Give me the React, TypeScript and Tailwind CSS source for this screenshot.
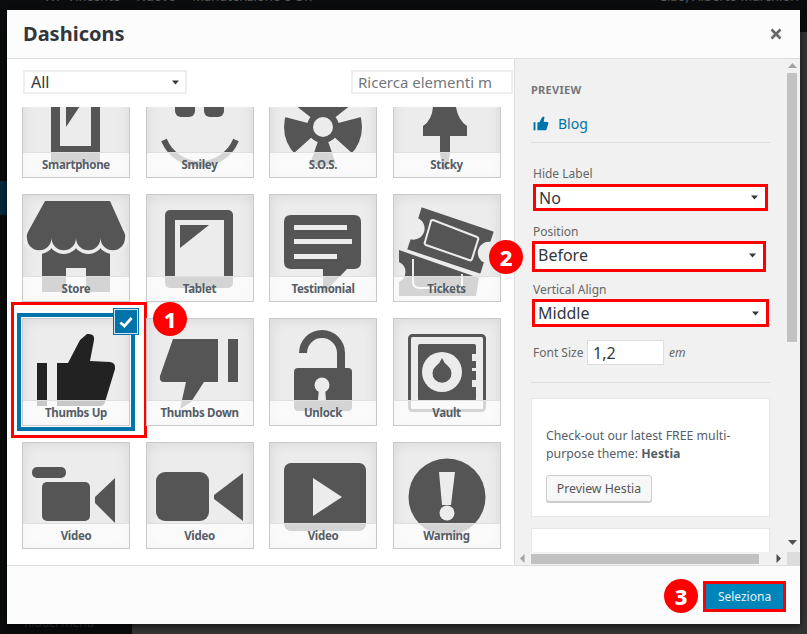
import type { ReactNode } from 'react';

const DARK = '#555555';
const LIGHT = '#ececec';

const thumbsUp = 'M35 45 L46 45 L58 22 L65 16 Q73 15 72 22 L68 43 L88 44 Q94 45 93 51 L83 84 Q82 88 78 88 L35 88 Z';

const icons: Record<string, ReactNode> = {
  Smartphone: (
    <>
      <rect x="29" y="16" width="49" height="77" fill={DARK} />
      <rect x="38" y="26" width="31" height="50" fill={LIGHT} />
      <path d="M44 30 H62 L44 57 Z" fill={DARK} />
    </>
  ),
  Smiley: (
    <>
      <rect x="29" y="32" width="20" height="15" rx="6" fill={DARK} />
      <rect x="58" y="32" width="20" height="15" rx="6" fill={DARK} />
      <path d="M18 70 A39 39 0 0 0 90 70" fill="none" stroke={DARK} strokeWidth="6" />
    </>
  ),
  'S.O.S.': (
    <>
      <circle cx="54" cy="57" r="39" fill={DARK} />
      <path d="M54 57 L21 31 L16 38 L12 46 Z M54 57 L87 31 L92 38 L96 46 Z M54 57 L24 84 L30 92 L40 97 Z M54 57 L84 84 L78 92 L68 97 Z" fill={LIGHT} />
      <circle cx="54" cy="57" r="16" fill={DARK} />
      <circle cx="54" cy="57" r="10" fill={LIGHT} />
    </>
  ),
  Sticky: (
    <path d="M40 16 H63 V37 Q65 50 74 56 V66 H57 V84 L54 100 L50 100 L47 84 V66 H30 V56 Q39 50 40 37 Z" fill={DARK} />
  ),
  Store: (
    <>
      <rect x="20" y="48" width="68" height="50" fill={DARK} />
      <rect x="44" y="74" width="20" height="24" fill={LIGHT} />
      <circle cx="17.25" cy="44" r="16" fill={LIGHT} />
      <circle cx="41.75" cy="44" r="16" fill={LIGHT} />
      <circle cx="66.25" cy="44" r="16" fill={LIGHT} />
      <circle cx="90.75" cy="44" r="16" fill={LIGHT} />
      <path d="M23 7 H88 L101 36 Q104 41 103 44 A12.25 12.25 0 0 1 78.5 44 A12.25 12.25 0 0 1 54 44 A12.25 12.25 0 0 1 29.5 44 A12.25 12.25 0 0 1 5 44 Q4 41 7 36 Z" fill={DARK} />
    </>
  ),
  Tablet: (
    <>
      <rect x="19" y="16" width="68" height="78" rx="5" fill={DARK} />
      <rect x="29" y="26" width="49" height="56" fill={LIGHT} />
      <path d="M34 31 H63 L34 54 Z" fill={DARK} />
    </>
  ),
  Testimonial: (
    <>
      <path d="M22 21 H85 Q92 21 92 28 V68 Q92 75 85 75 H78 L54 100 V75 H22 Q15 75 15 68 V28 Q15 21 22 21 Z" fill={DARK} />
      <rect x="25" y="31" width="53" height="5" fill={LIGHT} />
      <rect x="25" y="45" width="58" height="5" fill={LIGHT} />
      <rect x="25" y="60" width="43" height="5" fill={LIGHT} />
    </>
  ),
  Tickets: (
    <>
      <path d="M6 56 L86 84 L83 102 H6 V88 A11 11 0 0 0 6 68 Z" fill={DARK} />
      <path d="M20 65 V88 Q20 94 27 94 H69 V80" fill="none" stroke={LIGHT} strokeWidth="2" />
      <path d="M28 12 L102 37 L98 49 A10 10 0 0 0 92 68 L88 81 L13 56 L17 44 A10 10 0 0 0 24 25 Z" fill={DARK} stroke={LIGHT} strokeWidth="2" />
      <path d="M40 26 L84 43 Q86 44 85 46 L79 65 Q78 67 76 66 L33 51 Q31 50 32 48 L38 27 Q38 26 40 26 Z" fill="none" stroke={LIGHT} strokeWidth="2" />
    </>
  ),
  'Thumbs Up': (
    <>
      <rect x="15" y="45" width="10" height="43" fill="#222222" />
      <path d={thumbsUp} fill="#222222" />
    </>
  ),
  'Thumbs Down': (
    <>
      <rect x="82" y="21" width="10" height="43" fill={DARK} />
      <path d="M72 21 H27 L14 58 Q13 64 18 64 H40 L34 91 L45 84 L58 64 H72 Z" fill={DARK} />
    </>
  ),
  Unlock: (
    <>
      <path d="M34 35 A19 19 0 0 1 72 35 V50" fill="none" stroke={DARK} strokeWidth="8" />
      <rect x="25" y="50" width="58" height="43" rx="4" fill={DARK} />
      <circle cx="53" cy="67" r="7.5" fill={LIGHT} />
      <path d="M50 70 H56 L57 82 H49 Z" fill={LIGHT} />
    </>
  ),
  Vault: (
    <>
      <rect x="16.5" y="17.5" width="75" height="75" rx="3" fill="none" stroke={DARK} strokeWidth="3" />
      <rect x="25" y="26" width="58" height="57" rx="2" fill={DARK} />
      <rect x="79" y="36" width="4" height="7" fill={LIGHT} />
      <rect x="79" y="50" width="4" height="3" fill={LIGHT} />
      <rect x="79" y="62" width="4" height="7" fill={LIGHT} />
      <circle cx="49" cy="54" r="20" fill={LIGHT} />
      <path d="M49 40 Q51 45 55 48 A9.5 9.5 0 1 1 43 48 Q47 45 49 40 Z" fill={DARK} />
    </>
  ),
  Video1: (
    <>
      <rect x="10" y="25" width="34" height="11" rx="5" fill={DARK} />
      <rect x="20" y="40" width="48" height="39" rx="5" fill={DARK} />
      <path d="M93 36 V81 L73 61 V55 Z" fill={DARK} />
    </>
  ),
  Video2: (
    <>
      <rect x="10" y="30" width="53" height="49" rx="9" fill={DARK} />
      <path d="M97 31 V79 L68 57 V53 Z" fill={DARK} />
    </>
  ),
  Video3: (
    <>
      <rect x="15" y="21" width="82" height="68" rx="7" fill={DARK} />
      <path d="M44 36 V74 L73 55 Z" fill={LIGHT} />
    </>
  ),
  Warning: (
    <>
      <circle cx="54" cy="55" r="38.5" fill={DARK} />
      <path d="M46 30 H62 L58 63 H49 Z" fill={LIGHT} />
      <circle cx="54" cy="71" r="7.5" fill={LIGHT} />
    </>
  ),
};

const tiles = [
  { id: 'Smartphone', label: 'Smartphone' },
  { id: 'Smiley', label: 'Smiley' },
  { id: 'S.O.S.', label: 'S.O.S.' },
  { id: 'Sticky', label: 'Sticky' },
  { id: 'Store', label: 'Store' },
  { id: 'Tablet', label: 'Tablet' },
  { id: 'Testimonial', label: 'Testimonial' },
  { id: 'Tickets', label: 'Tickets' },
  { id: 'Thumbs Up', label: 'Thumbs Up' },
  { id: 'Thumbs Down', label: 'Thumbs Down' },
  { id: 'Unlock', label: 'Unlock' },
  { id: 'Vault', label: 'Vault' },
  { id: 'Video1', label: 'Video', short: true },
  { id: 'Video2', label: 'Video', short: true },
  { id: 'Video3', label: 'Video', short: true },
  { id: 'Warning', label: 'Warning', short: true },
];

function Tile({ id, label, short }: { id: string; label: string; short?: boolean }) {
  const selected = id === 'Thumbs Up';
  return (
    <div className={`relative w-[108px] border border-[#c9c9c9] bg-[#ececec] shadow-[inset_0_0_14px_rgba(0,0,0,0.09)] ${short ? 'h-[107px]' : 'h-[108px]'} ${selected ? 'outline-4 outline-offset-[1px] outline-[#0073aa]' : ''}`}>
      <svg viewBox="0 0 108 108" className="absolute -inset-px h-[108px] w-[108px]">
        {icons[id]}
      </svg>
      <div className="absolute inset-x-0 bottom-0 h-[25px] border-t border-[#dfdfdf] bg-white/75 text-center text-[11.5px] font-bold leading-[23px] tracking-[-0.3px] text-[#555d66]">
        {label}
      </div>
      {selected && (
        <>
          <div className="absolute -left-[12px] -top-[17px] h-[136px] w-[136px] border-[3px] border-[#ff0000]" />
          <div className="absolute -right-[10px] -top-[11px] flex h-[27px] w-[26px] items-center justify-center border border-[#0073aa] bg-[#0073aa] shadow-[inset_0_0_0_1px_#cfe3ee]">
            <svg viewBox="0 0 20 20" className="h-[16px] w-[16px]">
              <path d="M3 10.5 L8 15 L17 5" fill="none" stroke="#ffffff" strokeWidth="3.4" />
            </svg>
          </div>
        </>
      )}
    </div>
  );
}

function Marker({ n, className }: { n: number; className: string }) {
  return (
    <div className={`absolute flex h-[34px] w-[34px] items-center justify-center rounded-full bg-[#ff0000] text-[22px] font-extrabold leading-none text-white ${className}`}>
      {n}
    </div>
  );
}

function Arrow({ dir, className = '' }: { dir: 'up' | 'down' | 'left' | 'right'; className?: string }) {
  const d = { up: 'M0 6 L4.5 1 L9 6 Z', down: 'M0 2 L4.5 7 L9 2 Z', left: 'M6.5 0 L2 4.5 L6.5 9 Z', right: 'M2.5 0 L7 4.5 L2.5 9 Z' }[dir];
  return (
    <svg viewBox="0 0 9 9" className={`shrink-0 ${className}`}>
      <path d={d} fill="currentColor" />
    </svg>
  );
}

function RedSelect({ value, className }: { value: string; className: string }) {
  return (
    <div className={`flex items-center justify-between border-[3px] border-[#ff0000] bg-white pl-[3px] pr-[7px] text-[16px] text-[#32373c] ${className}`}>
      <span>{value}</span>
      <Arrow dir="down" className="h-[7px] w-[7px] text-[#32373c]" />
    </div>
  );
}

export default function App() {
  return (
    <div className="relative h-[634px] w-[807px] overflow-hidden bg-[#333333] font-['Noto_Sans',sans-serif]">
      {/* admin page behind the modal */}
      <div className="h-[32px] overflow-hidden bg-[#0b0c0e] text-[13px] leading-[14px] text-[#55585c]">
        <div className="-mt-[11px] flex justify-between pl-[44px] pr-[8px]">
          <div className="flex gap-[16px]">
            <span>WP Vincente</span>
            <span>Nuovo</span>
            <span>Manutenzione è On</span>
          </div>
          <span>Ciao, Alberto Marchiori</span>
        </div>
      </div>
      <div className="flex h-[602px]">
        <div className="flex w-[132px] flex-col bg-[#090b0c]">
          <div className="mt-[149px] h-[34px] bg-[#03293c]" />
          <div className="mt-auto pb-[4px] pl-[24px] text-[12px] leading-[14px] text-[#2e3134]">Riduci menu</div>
        </div>
      </div>

      {/* modal */}
      <div className="absolute left-[7px] top-[10px] flex h-[614px] w-[793px] flex-col bg-[#fcfcfc] shadow-[0_2px_6px_rgba(0,0,0,0.6)]">
        <div className="flex h-[49px] shrink-0 items-center justify-between border-b border-[#dddddd] pl-[16px] pr-[18px]">
          <h1 className="text-[20px] font-bold text-[#32373c]">Dashicons</h1>
          <svg viewBox="0 0 12 12" className="h-[12px] w-[12px]">
            <path d="M1.5 1.5 L10.5 10.5 M10.5 1.5 L1.5 10.5" stroke="#666666" strokeWidth="2.6" />
          </svg>
        </div>

        <div className="flex h-[506px] shrink-0">
          <div className="flex w-[508px] shrink-0 flex-col border-r border-[#dddddd] bg-white">
            <div className="flex h-[48px] shrink-0 items-start justify-between pl-[16px] pr-[1px] pt-[11px]">
              <div className="flex h-[24px] w-[164px] items-center justify-between border-2 border-[#eeeeee] pl-[6px] pr-[6px] text-[16px] text-[#32373c]">
                <span>All</span>
                <Arrow dir="down" className="h-[7px] w-[7px]" />
              </div>
              <div className="flex h-[24px] w-[162px] items-center overflow-hidden whitespace-nowrap border-2 border-[#eeeeee] pl-[5px] text-[15px] text-[#72777c]">
                Ricerca elementi m
              </div>
            </div>
            <div className="min-h-0 flex-1 overflow-hidden pl-[15px]">
              <div className="-mt-[37px] grid grid-cols-[repeat(4,108px)] gap-x-[15.5px] gap-y-[16px]">
                {tiles.map((t) => (
                  <Tile key={t.id} id={t.id} label={t.label} short={t.short} />
                ))}
              </div>
            </div>
          </div>

          <div className="flex min-w-0 flex-1 flex-col bg-[#f1f1f1]">
            <div className="flex min-h-0 flex-1">
              <div className="min-w-0 flex-1 overflow-hidden pl-[16px] pr-[17px]">
                <div className="mt-[24px] text-[11px] font-bold uppercase leading-[14px] tracking-wide text-[#72777c]">Preview</div>
                <div className="mt-[16px] flex h-[20px] items-center gap-[9px] pl-[2px] text-[14px] text-[#0073aa]">
                  <svg viewBox="12 13 84 78" className="h-[15px] w-[16px]">
                    <rect x="15" y="45" width="10" height="43" fill="#0073aa" />
                    <path d={thumbsUp} fill="#0073aa" />
                  </svg>
                  <span>Blog</span>
                </div>
                <div className="mt-[9px] border-t border-[#dddddd]" />

                <div className="mt-[22px] text-[12px] leading-[16px] text-[#666666]">
                  <div className="h-[16px] pl-[2px] pt-[1px]">Hide Label</div>
                  <RedSelect value="No" className="ml-[2px] mt-[3px] h-[27px] w-[235px]" />
                  <div className="mt-[12px] h-[16px] pl-[2px] pt-[1px]">Position</div>
                  <RedSelect value="Before" className="ml-[1px] mt-[2px] h-[31px] w-[234px] pb-[3px]" />
                  <div className="mt-[9px] h-[16px] pl-[2px] pt-[1px]">Vertical Align</div>
                  <RedSelect value="Middle" className="ml-[1px] mt-[2px] h-[28px] w-[237px]" />
                  <div className="mt-[13px] flex h-[25px] items-center pl-[2px]">
                    <span className="w-[54px]">Font Size</span>
                    <div className="flex h-[25px] w-[77px] items-center border border-[#dddddd] bg-white pl-[5px] text-[16px] text-[#32373c]">1,2</div>
                    <span className="ml-[5px] italic">em</span>
                  </div>
                </div>

                <div className="mt-[17px] border-t border-[#dddddd]" />
                <div className="mt-[15px] h-[119px] border border-[#e5e5e5] bg-white pl-[14px] pt-[28px] text-[12.3px] leading-[18px] text-[#555d66]">
                  <p>
                    Check-out our latest FREE multi-
                    <br />
                    purpose theme: <b>Hestia</b>
                  </p>
                  <div className="mt-[12px] flex h-[27px] w-[106px] items-center justify-center rounded-[3px] border border-[#cccccc] bg-[#f7f7f7] shadow-[0_1px_0_#cccccc] text-[#555555]">
                    Preview Hestia
                  </div>
                </div>
                <div className="mt-[11px] h-[60px] border border-[#e5e5e5] bg-white" />
              </div>

              <div className="flex w-[13px] shrink-0 flex-col items-center pr-[3px] text-[#a3a3a3]">
                <Arrow dir="up" className="mt-[3px] h-[9px] w-[9px]" />
                <div className="mt-[2px] h-[269px] w-[10px] bg-[#c1c1c1]" />
                <Arrow dir="down" className="mb-[5px] mt-auto h-[9px] w-[9px] text-[#505050]" />
              </div>
            </div>
            <div className="flex h-[13px] shrink-0 items-center">
              <Arrow dir="left" className="ml-[3px] h-[9px] w-[9px] text-[#a3a3a3]" />
              <div className="ml-[4px] h-[10px] w-[228px] bg-[#c1c1c1]" />
              <Arrow dir="right" className="ml-[15px] h-[9px] w-[9px] text-[#505050]" />
              <div className="ml-auto h-[13px] w-[13px] bg-[#dcdcdc]" />
            </div>
          </div>
        </div>

        <div className="flex min-h-0 flex-1 items-start justify-end border-t border-[#dddddd] pr-[14px] pt-[15px]">
          <div className="border-[3px] border-[#ff0000]">
            <div className="flex h-[25px] w-[77px] items-center justify-center bg-[#0085ba] text-[12px] text-[#e4f2f8]">Seleziona</div>
          </div>
        </div>

        <Marker n={1} className="left-[146px] top-[292px]" />
        <Marker n={2} className="left-[482px] top-[230px]" />
        <Marker n={3} className="left-[657px] top-[569px]" />
      </div>
    </div>
  );
}
